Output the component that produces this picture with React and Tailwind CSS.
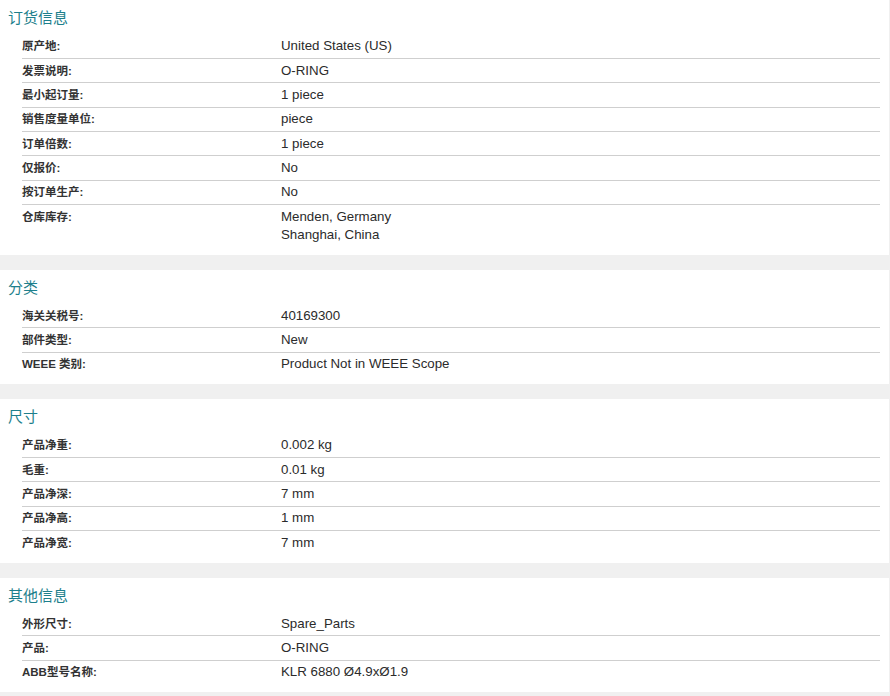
import React from 'react';

const sections = [
    {
        title: '订货信息',
        rows: [
            ['原产地:', ['United States (US)']],
            ['发票说明:', ['O-RING']],
            ['最小起订量:', ['1 piece']],
            ['销售度量单位:', ['piece']],
            ['订单倍数:', ['1 piece']],
            ['仅报价:', ['No']],
            ['按订单生产:', ['No']],
            ['仓库库存:', ['Menden, Germany', 'Shanghai, China']],
        ],
    },
    {
        title: '分类',
        rows: [
            ['海关关税号:', ['40169300']],
            ['部件类型:', ['New']],
            ['WEEE 类别:', ['Product Not in WEEE Scope']],
        ],
    },
    {
        title: '尺寸',
        rows: [
            ['产品净重:', ['0.002 kg']],
            ['毛重:', ['0.01 kg']],
            ['产品净深:', ['7 mm']],
            ['产品净高:', ['1 mm']],
            ['产品净宽:', ['7 mm']],
        ],
    },
    {
        title: '其他信息',
        rows: [
            ['外形尺寸:', ['Spare_Parts']],
            ['产品:', ['O-RING']],
            ['ABB型号名称:', ['KLR 6880 Ø4.9xØ1.9']],
        ],
    },
];

// One attribute line: bold label on the left, value(s) on the right
function Row({ label, values, last }) {
    return (
        <div className={`flex py-[2.7px] ${last ? '' : 'border-b border-[#cfcfcf]'}`}>
            <div className="w-[259px] shrink-0 text-[11.5px] font-bold leading-[18px] text-[#333]">
                {label}
            </div>
            <div className="text-[13.3px] leading-[18px] text-[#2b2b2b]">
                {values.map((v) => (
                    <div key={v}>{v}</div>
                ))}
            </div>
        </div>
    );
}

function Section({ title, rows }) {
    return (
        <div className="bg-white pt-2 pb-[8px]">
            <h3 className="pl-2 text-[15px] leading-5 font-normal text-[#1d7f8c]">{title}</h3>
            <div className="mt-[6.5px] ml-[22px] mr-[9px]">
                {rows.map(([label, values], i) => (
                    <Row key={label} label={label} values={values} last={i === rows.length - 1} />
                ))}
            </div>
        </div>
    );
}

export default function App() {
    return (
        <div
            className="min-h-[696px] w-[890px] bg-[#f0f0f0]"
            style={{ fontFamily: '"Liberation Sans", Arial, "Noto Sans CJK SC", sans-serif' }}
        >
            <div className="flex w-[889px] flex-col gap-[15px]">
                {sections.map((s) => (
                    <Section key={s.title} title={s.title} rows={s.rows} />
                ))}
            </div>
        </div>
    );
}
